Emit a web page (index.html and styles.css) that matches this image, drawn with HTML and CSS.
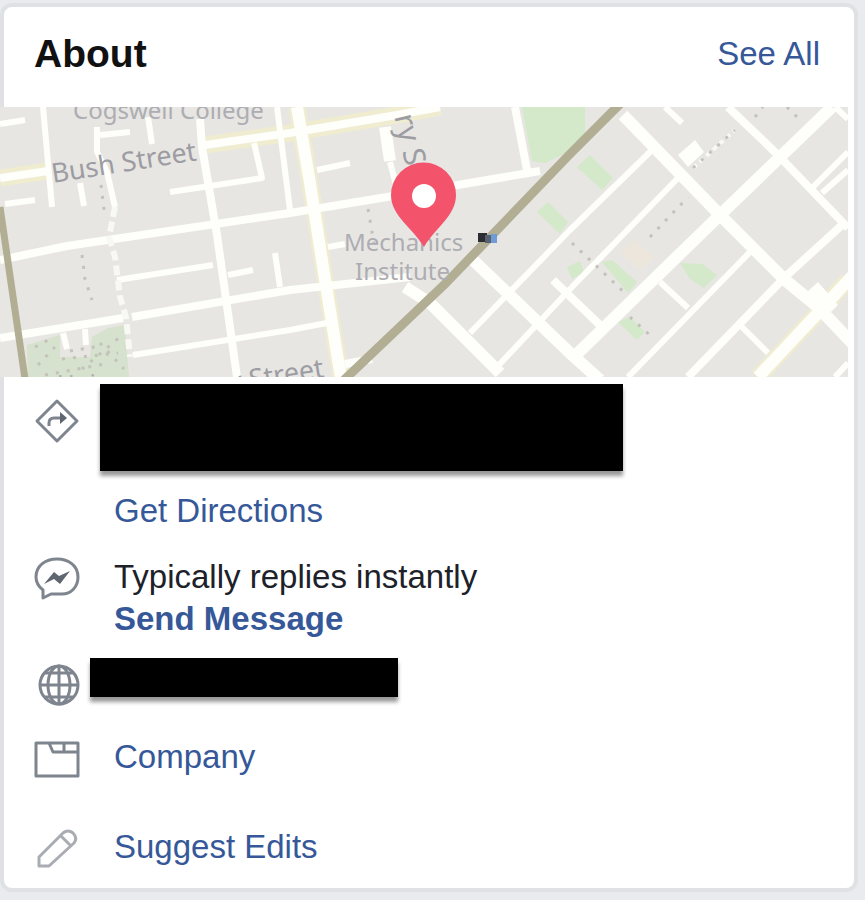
FILE: index.html
```html
<!DOCTYPE html>
<html lang="en">
<head>
  <meta charset="UTF-8">
  <meta name="viewport" content="width=device-width, initial-scale=1.0">
  <title>About</title>
  <link rel="stylesheet" href="styles.css">
</head>
<body>
  <section class="card">
    <header class="card-header">
      <h2>About</h2>
      <a href="#">See All</a>
    </header>

    <svg class="map" viewBox="0 0 848 270" role="img" aria-label="Map">
      <rect class="land" width="848" height="270"/>

      <!-- parks -->
      <g class="park">
        <path d="M522 0H585V28L566 46L545 56L532 54Z"/>
        <path d="M577 60L590 48L613 71L602 83Z"/>
        <path d="M537 105L548 95L568 115L560 127Z"/>
        <path d="M567 160L580 154L584 165L572 172Z"/>
        <path d="M602 155L612 153L637 175L628 186Z"/>
        <path d="M680 156L702 157L717 168L704 181L690 172Z"/>
        <path d="M618 215L630 210L645 225L637 233Z"/>
      </g>
      <path class="park-light" d="M27 238L60 228L60 250L90 250L92 230L108 221L125 218L129 270H28Z"/>
      <path class="plaza" d="M620 146L635 133L655 150L640 163Z"/>

      <!-- road edges -->
      <g class="road-edge">
        <path d="M0 71L48 64M205 38L290 26L397 8L440 0M297 0L310 76L323 160L338 253L341 270M848 173L818 206L758 270"/>
      </g>

      <!-- roads -->
      <g class="road road-s">
        <path d="M43 0L52 100M0 17L25 13M5 97L35 93M80 76L84 99M97 20L97 45L107 65L115 100M100 28L130 25M148 10L152 37"/>
        <path d="M170 85L210 79L262 71L254 36M117 173L213 158M228 168L253 163M275 146L280 180M277 0L290 103"/>
        <path d="M133 248L290 223L327 216M63 226L67 242M85 222L86 238M317 63L350 56M328 140L345 137M390 55L397 82"/>
        <path d="M665 0L682 16M848 45L813 80M848 63L822 86M660 175L688 201M740 218L768 246M848 256L835 270"/>
        <path d="M652 43L570 123L470 226M678 71L572 180L497 260M752 143L628 270M835 0L848 12"/>
      </g>
      <g class="road road-m">
        <path d="M0 153L67 139L290 106L387 90L540 64M0 231L123 211M132 210L290 183L410 170M515 0L527 63"/>
        <path d="M553 173L602 220M728 0L778 48L848 121M842 118L785 170L688 270"/>
        <path d="M0 71L48 64M205 38L290 26L397 8L440 0M200 12L202 40L217 128L237 270M345 257L372 252"/>
      </g>
      <g class="road road-l">
        <path d="M297 0L310 76L323 160L338 253L341 270M385 20L390 54M405 180L430 196L500 266M473 153L570 246L600 273"/>
        <path d="M623 8L720 108L785 173L818 200L854 238M578 246L720 108L832 0M854 167L818 206L758 270"/>
      </g>
      <path class="block" d="M678 48L695 33L704 45L688 60ZM806 186L818 175L838 198L824 212Z"/>
      <path class="lane" d="M115 100L109 130L115 150L120 190L126 210L130 250"/>
      <path class="lane lane-thin" d="M693 61L735 23"/>
      <path class="dots" d="M82 148L85 172L92 193M101 78L105 110M650 130L688 90M572 136L625 186M630 210L652 230M368 102L374 136M755 10L763 0M787 0L797 10M693 61L735 23"/>
      <path class="dots" d="M35 240L50 232M38 258L55 240M70 244L95 240M62 252L118 246M45 268L110 256M82 262L120 230M100 236L124 262"/>

      <!-- rail -->
      <path class="rail rail-s" d="M0 100L25 272"/>
      <path class="rail" d="M344 273L446 176L570 47L621 -4"/>

      <!-- station -->
      <rect class="station" x="478" y="126" width="9" height="9"/>
      <rect class="station-mid" x="485" y="128" width="7" height="8"/>
      <rect class="station-blue" x="491" y="127" width="6" height="9"/>

      <!-- labels -->
      <g class="label">
        <text x="73" y="12">Cogswell College</text>
        <text x="344" y="144">Mechanics</text>
        <text x="355" y="173">Institute</text>
        <text x="57" y="285">Union</text>
      </g>
      <g class="label label-street">
        <text transform="translate(53 76) rotate(-9)">Bush Street</text>
        <text transform="translate(325 270) rotate(-9)" text-anchor="end">y Street</text>
        <text class="label-tall" transform="translate(406 60) rotate(77)" text-anchor="end">ry S</text>
      </g>

      <!-- marker -->
      <path class="pin" fill-rule="evenodd" d="M424 140C413 121 391 109 391 88A32 32 0 0 1 456 88C456 109 435 121 424 140Z"/>
      <circle class="pin-hole" cx="424" cy="89" r="12"/>
    </svg>

    <ul class="info">
      <li class="row row-address">
        <svg class="icon" viewBox="0 0 46 46" aria-hidden="true">
          <path d="M23 3L43 23L23 43L3 23Z"/>
          <path d="M15 28V25Q15 20 20 20H29"/>
          <path class="fill" d="M26 14L33 20L26 26Z"/>
        </svg>
        <div class="content">
          <div class="redacted redacted-address"></div>
          <a href="#">Get Directions</a>
        </div>
      </li>
      <li class="row">
        <svg class="icon" viewBox="0 0 46 46" aria-hidden="true">
          <path d="M9 34V42L17 38H28C37 38 44 31 44 21C44 10 35 3 23 3C11 3 2 10 2 21C2 27 5 31 9 34Z"/>
          <path class="fill" d="M10 28L20 16L25 20L36 15L26 28L20 23Z"/>
        </svg>
        <div class="content">
          <span>Typically replies instantly</span>
          <a class="strong" href="#">Send Message</a>
        </div>
      </li>
      <li class="row row-website">
        <svg class="icon icon-globe" viewBox="0 0 46 46" aria-hidden="true">
          <circle cx="25" cy="23" r="19"/>
          <ellipse cx="25" cy="23" rx="11" ry="19"/>
          <path d="M25 4V42M6 23H44M10 11H40M10 35H40"/>
        </svg>
        <div class="content">
          <div class="redacted redacted-website"></div>
        </div>
      </li>
      <li class="row">
        <svg class="icon" viewBox="0 0 46 46" aria-hidden="true">
          <path d="M2 7H44V40H2ZM15 7L19 16H44M30 7V16"/>
        </svg>
        <div class="content">
          <a href="#">Company</a>
        </div>
      </li>
      <li class="row row-edit">
        <svg class="icon icon-light" viewBox="0 0 46 46" aria-hidden="true">
          <path d="M5 40V31L29 7Q34 3 39 7Q44 12 40 17L15 40ZM27 10L37 20"/>
        </svg>
        <div class="content">
          <a href="#">Suggest Edits</a>
        </div>
      </li>
    </ul>
  </section>
</body>
</html>
```

FILE: styles.css
```css
* {
  box-sizing: border-box;
}

body {
  margin: 3px 7px 8px 0;
  background: #e9ebee;
  color: #1d2129;
  font-family: "Liberation Sans", Arial, sans-serif;
  font-size: 33px;
  line-height: 42px;
}

a {
  color: #365899;
  text-decoration: none;
}

a:hover {
  text-decoration: underline;
}

.card {
  background: #fff;
  border: 4px solid #dfe1e5;
  border-radius: 12px;
  padding-bottom: 4px;
}

.card-header {
  display: flex;
  justify-content: space-between;
  align-items: center;
  height: 100px;
  padding: 0 34px 6px 30px;
}

.card-header h2 {
  margin: 0;
  color: #111;
  font-size: 39px;
}

/* map */
.map {
  display: block;
  width: calc(100% - 2px);
  margin-left: -4px;
}

.land {
  fill: #e7e6e2;
}

.park {
  fill: #d3e9c9;
}

.park-light {
  fill: #d6e2cd;
}

.plaza {
  fill: #ece6dd;
}

.road,
.road-edge,
.lane,
.dots,
.rail {
  fill: none;
  stroke-linejoin: round;
}

.road {
  stroke: #fefefa;
}

.road-s {
  stroke-width: 6px;
}

.road-m {
  stroke-width: 8px;
}

.road-l {
  stroke-width: 12px;
}

.road-edge {
  stroke: #efecd0;
  stroke-width: 17px;
}

.block {
  fill: #fefefa;
}

.lane {
  stroke: #f8f8f4;
  stroke-width: 6px;
  stroke-dasharray: 10 5;
}

.lane-thin {
  stroke-width: 4px;
  stroke-dasharray: 5 4;
}

.dots {
  stroke: #c4c2bb;
  stroke-width: 3px;
  stroke-dasharray: 3 8;
}

.rail {
  stroke: #b1ae94;
  stroke-width: 9px;
}

.rail-s {
  stroke-width: 7px;
}

.station {
  fill: #2b2d33;
}

.station-mid {
  fill: #56606f;
}

.station-blue {
  fill: #6f9bd6;
}

.label {
  fill: #adadb3;
  font-family: "Noto Sans", sans-serif;
  font-size: 24px;
}

.label-street {
  fill: #9c9ca2;
  font-size: 27px;
}

.label-tall {
  font-size: 30px;
}

.pin {
  fill: #f3536b;
}

.pin-hole {
  fill: #fff;
}

/* info rows */
.info {
  list-style: none;
  margin: 0;
  padding: 0 30px;
}

.row {
  display: flex;
  align-items: flex-start;
  gap: 34px;
  padding: 12px 0;
}

.row-address {
  padding-top: 7px;
}

.row-address .icon {
  margin-top: 14px;
}

.row-website {
  padding: 6px 0 16px;
}

.row-edit {
  margin-top: 20px;
}

.content {
  display: flex;
  flex: 1;
  flex-direction: column;
  align-items: flex-start;
}

.strong {
  font-weight: bold;
}

.redacted {
  width: 100%;
  background: #000;
  box-shadow: 0 5px 4px rgba(0, 0, 0, 0.4);
}

.redacted-address {
  max-width: 523px;
  height: 87px;
  margin: 0 0 19px -14px;
}

.redacted-website {
  max-width: 308px;
  height: 39px;
  margin-left: -24px;
}

.icon {
  flex: none;
  width: 46px;
  height: 46px;
  fill: none;
  stroke: #7f858f;
  stroke-width: 3px;
  stroke-linejoin: round;
}

.icon .fill {
  fill: #5f6670;
  stroke: none;
}

.icon-globe {
  margin-top: 4px;
}

.icon-light {
  stroke: #a9acb2;
}
```
